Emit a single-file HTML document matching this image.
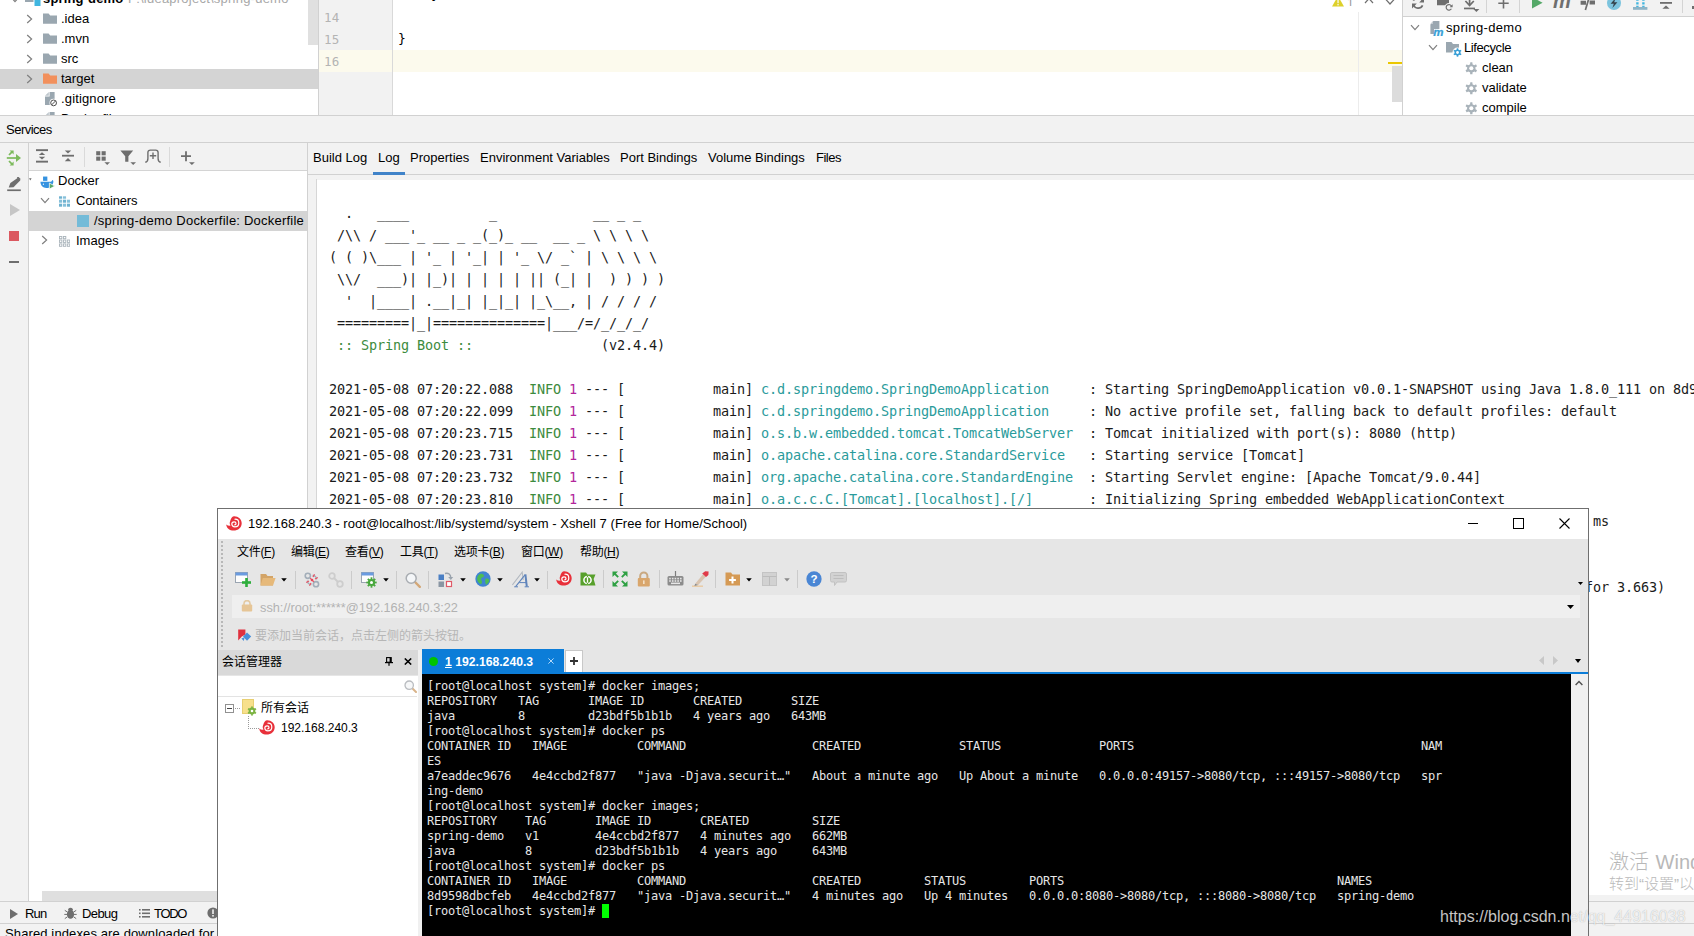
<!DOCTYPE html>
<html lang="zh-CN">
<head>
<meta charset="utf-8">
<title>IDEA Services - Xshell</title>
<style>
html,body{margin:0;padding:0;}
body{width:1694px;height:936px;overflow:hidden;position:relative;background:#fff;
 font-family:"Liberation Sans","Noto Sans CJK SC",sans-serif;font-size:13px;color:#000;}
.abs{position:absolute;}
.ui{font-family:"Liberation Sans","Noto Sans CJK SC",sans-serif;font-size:13px;color:#000;white-space:pre;line-height:22px;}
.hl{position:absolute;height:1px;background:#d1d1d1;}
.vl{position:absolute;width:1px;background:#d1d1d1;}
.mono{font-family:"DejaVu Sans Mono","Liberation Mono",monospace;white-space:pre;}
/* ---------- IDE top ---------- */
#proj{left:0;top:0;width:318px;height:115px;background:#fff;overflow:hidden;}
#gutter{left:319px;top:0;width:73px;height:115px;background:#f2f2f2;}
#editor{left:393px;top:0;width:1010px;height:115px;background:#fff;}
#maven{left:1403px;top:0;width:291px;height:115px;background:#fff;overflow:hidden;}
.row{position:absolute;left:0;height:20px;line-height:20px;white-space:pre;font-size:13px;}
.ln{position:absolute;left:324px;width:30px;font-family:"DejaVu Sans Mono","Liberation Mono",monospace;font-size:12.5px;color:#adadad;line-height:22px;height:22px;}
/* ---------- services ---------- */
#svc-head{left:0;top:116px;width:1694px;height:26px;background:#f2f2f2;}
#svc-side{left:0;top:143px;width:28px;height:758px;background:#f2f2f2;}
#svc-tree{left:29px;top:143px;width:278px;height:758px;background:#fff;overflow:hidden;}
#svc-tb{left:0;top:0;width:278px;height:28px;background:#f2f2f2;}
#con-tabs{left:308px;top:143px;width:1386px;height:31px;background:#f2f2f2;}
#con-pad{left:308px;top:175px;width:1386px;height:5px;background:#f2f2f2;}
#con-gut{left:308px;top:175px;width:9px;height:726px;background:#f2f2f2;}
#con{left:317px;top:180px;width:1377px;height:715px;background:#fff;overflow:hidden;}
#con pre{margin:0;position:absolute;left:12px;top:22px;font-family:"DejaVu Sans Mono","Liberation Mono",monospace;font-size:13.5px;letter-spacing:-0.128px;line-height:22px;color:#1a1a1a;}
.g{color:#3d8b3d;} .m{color:#b3269b;} .c{color:#2a9b9b;}
#botbar{left:0;top:902px;width:1694px;height:21px;background:#f2f2f2;}
#status{left:0;top:924px;width:1694px;height:12px;background:#f2f2f2;overflow:hidden;}
/* ---------- xshell ---------- */
#xs{left:217px;top:508px;width:1372px;height:428px;background:#e6e6e6;box-sizing:border-box;border:1px solid #6f6f6f;border-bottom:none;overflow:hidden;}
#xs-title{left:0;top:0;width:1370px;height:30px;background:#fff;}
#xs-addr{left:14px;top:86px;width:1348px;height:23px;background:#efefef;}
#xs-term{left:204px;top:165px;width:1149px;height:270px;background:#000;overflow:hidden;}
#xs-term pre{margin:0;position:absolute;left:5px;top:5px;font-family:"DejaVu Sans Mono","Liberation Mono",monospace;font-size:12px;letter-spacing:-0.224px;line-height:15px;color:#e6e6e6;}
.cur{background:#00ff00;}
.xm{font:12px/20px "Liberation Sans","Noto Sans CJK SC",sans-serif;color:#000;white-space:pre;letter-spacing:-0.3px;}
#xs-sess{left:0;top:165px;width:200px;height:270px;background:#fff;}
</style>
</head>
<body>
<!-- ======== IDE top: project tree ======== -->
<div id="proj" class="abs">
<div class="abs" style="left:0;top:69px;width:318px;height:20px;background:#d4d4d4"></div>
<div class="abs" style="left:308px;top:0;width:10px;height:45px;background:#e0e0e0"></div>
<svg class="abs" style="left:25px;top:-9px" width="16" height="15" viewBox="0 0 16 15"><path d="M0 0H6L7.5 2H14V11H0Z" fill="#9aa7b0"/><rect x="8.5" y="8" width="7" height="7" fill="#fff"/><rect x="9.5" y="9" width="6" height="6" fill="#40b6e0"/></svg>
<span class="ui abs" style="left:43px;top:-12px;font-weight:bold;letter-spacing:0.15px">spring-demo</span>
<svg class="abs" style="left:10px;top:-4px" width="10" height="7" viewBox="0 0 10 7"><path d="M1 1.2 L5 5.6 L9 1.2" fill="none" stroke="#7f7f7f" stroke-width="1.2"/></svg>
<span class="ui abs" style="left:128px;top:-12px;color:#a8a8a8;letter-spacing:0.23px">F:\ideaproject\spring-demo</span>
<svg class="abs" style="left:26px;top:14px" width="7" height="10" viewBox="0 0 7 10"><path d="M1.2 1 L5.6 5 L1.2 9" fill="none" stroke="#7f7f7f" stroke-width="1.2"/></svg>
<svg class="abs" style="left:43px;top:13px" width="14" height="11" viewBox="0 0 14 11"><path d="M0 0.4H5.6L7.2 2.4H14V10.8H0Z" fill="#9aa7b0"/></svg>
<span class="ui abs" style="left:61px;top:8px">.idea</span>
<svg class="abs" style="left:26px;top:34px" width="7" height="10" viewBox="0 0 7 10"><path d="M1.2 1 L5.6 5 L1.2 9" fill="none" stroke="#7f7f7f" stroke-width="1.2"/></svg>
<svg class="abs" style="left:43px;top:33px" width="14" height="11" viewBox="0 0 14 11"><path d="M0 0.4H5.6L7.2 2.4H14V10.8H0Z" fill="#9aa7b0"/></svg>
<span class="ui abs" style="left:61px;top:28px">.mvn</span>
<svg class="abs" style="left:26px;top:54px" width="7" height="10" viewBox="0 0 7 10"><path d="M1.2 1 L5.6 5 L1.2 9" fill="none" stroke="#7f7f7f" stroke-width="1.2"/></svg>
<svg class="abs" style="left:43px;top:53px" width="14" height="11" viewBox="0 0 14 11"><path d="M0 0.4H5.6L7.2 2.4H14V10.8H0Z" fill="#9aa7b0"/></svg>
<span class="ui abs" style="left:61px;top:48px">src</span>
<svg class="abs" style="left:26px;top:74px" width="7" height="10" viewBox="0 0 7 10"><path d="M1.2 1 L5.6 5 L1.2 9" fill="none" stroke="#7f7f7f" stroke-width="1.2"/></svg>
<svg class="abs" style="left:43px;top:73px" width="14" height="11" viewBox="0 0 14 11"><path d="M0 0.4H5.6L7.2 2.4H14V10.8H0Z" fill="#f2905c"/></svg>
<span class="ui abs" style="left:61px;top:68px">target</span>
<svg class="abs" style="left:45px;top:92px" width="13" height="15" viewBox="0 0 13 15"><path d="M4.6 0H9.6V13H0V4.6H4.6Z" fill="#9aa7b0"/><path d="M0 3.8L3.8 0V3.8Z" fill="#bcc5cb"/><circle cx="8.6" cy="10.9" r="4.1" fill="#fff"/><circle cx="8.6" cy="10.9" r="2.9" fill="none" stroke="#4d4d4d" stroke-width="1"/><path d="M6.6 12.9L10.6 8.9" stroke="#4d4d4d" stroke-width="1"/></svg>
<span class="ui abs" style="left:61px;top:88px;letter-spacing:0.15px">.gitignore</span>
<svg class="abs" style="left:45px;top:112px" width="13" height="15" viewBox="0 0 13 15"><path d="M4.6 0H9.6V13H0V4.6H4.6Z" fill="#9aa7b0"/><path d="M0 3.8L3.8 0V3.8Z" fill="#bcc5cb"/></svg>
<span class="ui abs" style="left:61px;top:108px">Dockerfile</span>
</div>
<div class="vl" style="left:318px;top:0;height:115px"></div>
<div id="gutter" class="abs">
<div class="abs" style="left:0;top:50px;width:73px;height:22px;background:#fcfaed"></div>
<span class="abs mono" style="left:5px;top:7px;font-size:12.5px;letter-spacing:0.2px;line-height:22px;color:#b4b4b4">14</span>
<span class="abs mono" style="left:5px;top:29px;font-size:12.5px;letter-spacing:0.2px;line-height:22px;color:#b4b4b4">15</span>
<span class="abs mono" style="left:5px;top:51px;font-size:12.5px;letter-spacing:0.2px;line-height:22px;color:#b4b4b4">16</span>
</div>
<div class="vl" style="left:392px;top:0;height:115px;background:#d9d9d9"></div>
<div id="editor" class="abs">
<div class="abs" style="left:0;top:50px;width:1010px;height:22px;background:#fcfaed"></div>
<span class="abs mono" style="left:38px;top:-16px;font-size:13px;line-height:22px;color:#000">}</span>
<span class="abs mono" style="left:5px;top:28px;font-size:13px;line-height:22px;color:#000">}</span>
<svg class="abs" style="left:939px;top:-4px" width="12" height="11" viewBox="0 0 12 11"><path d="M6 0L12 10.6H0Z" fill="#ddd02a"/><rect x="5.3" y="3.4" width="1.5" height="3.8" fill="#f6f3d0"/><rect x="5.3" y="8" width="1.5" height="1.4" fill="#f6f3d0"/></svg>
<div class="abs" style="left:954px;top:0;width:8px;height:6px;overflow:hidden"><span class="ui abs" style="left:0;top:-4px;color:#9a9a9a;font-size:12px;line-height:14px;height:14px">1</span></div>
<svg class="abs" style="left:971px;top:-4px" width="10" height="8" viewBox="0 0 10 8"><path d="M1 7L5 2.6L9 7" fill="none" stroke="#6e6e6e" stroke-width="1.2"/></svg>
<svg class="abs" style="left:992px;top:-3px" width="10" height="8" viewBox="0 0 10 8"><path d="M1 2.6L5 7L9 2.6" fill="none" stroke="#6e6e6e" stroke-width="1.2"/></svg>
<div class="abs" style="left:965px;top:12px;width:1px;height:103px;background:#ececec"></div>
<div class="abs" style="left:995px;top:62px;width:15px;height:2px;background:#ebc700"></div>
<div class="abs" style="left:999px;top:66px;width:11px;height:36px;background:#dcdcdc"></div>
</div>
<div class="vl" style="left:1402px;top:0;height:115px"></div>
<div id="maven" class="abs">
<div class="abs" style="left:0;top:0;width:291px;height:16px;background:#f2f2f2"></div>
<div class="hl" style="left:0;top:16px;width:291px"></div>
<svg class="abs" style="left:7px;top:-5px" width="16" height="16" viewBox="0 0 16 16"><g fill="none" stroke="#6e6e6e" stroke-width="1.7"><path d="M12.6 6.2A5 5 0 0 0 3.4 5.6"/><path d="M3.4 9.8A5 5 0 0 0 12.6 10.4"/></g><path d="M14 2.6V7.4H9.2Z" fill="#6e6e6e"/><path d="M2 13.4V8.6H6.8Z" fill="#6e6e6e"/></svg>
<svg class="abs" style="left:34px;top:-5px" width="16" height="17" viewBox="0 0 16 17"><path d="M0 1H5L6.4 3H12V10.3H0Z" fill="#6e6e6e"/><circle cx="12" cy="12.4" r="4.4" fill="#f2f2f2"/><path d="M14.6 11.4A2.8 2.8 0 1 0 14.4 13.8" fill="none" stroke="#6e6e6e" stroke-width="1.2"/><path d="M15.6 9.2V12.2H12.6Z" fill="#6e6e6e"/></svg>
<svg class="abs" style="left:61px;top:-5px" width="16" height="17" viewBox="0 0 16 17"><path d="M5.6 0V10" stroke="#6e6e6e" stroke-width="1.7"/><path d="M1.4 6L5.6 10.4L9.8 6" fill="none" stroke="#6e6e6e" stroke-width="1.7"/><rect x="0" y="12.6" width="11" height="1.7" fill="#6e6e6e"/><path d="M9.4 14H15.4L12.4 17Z" fill="#6e6e6e"/></svg>
<div class="vl" style="left:83px;top:0;height:13px;background:#d4d4d4"></div>
<svg class="abs" style="left:95px;top:-2px" width="11" height="11" viewBox="0 0 11 11"><path d="M5.5 0V10.4M0.3 5.2H10.7" stroke="#6e6e6e" stroke-width="1.6"/></svg>
<div class="vl" style="left:116px;top:0;height:13px;background:#d4d4d4"></div>
<svg class="abs" style="left:129px;top:-3px" width="11" height="12" viewBox="0 0 11 12"><path d="M0 0L10.6 5.8L0 11.6Z" fill="#55a868"/></svg>
<span class="abs" style="left:150px;top:-10px;font:italic bold 20px/22px 'Liberation Sans',sans-serif;color:#6e6e6e;letter-spacing:-1px">m</span>
<svg class="abs" style="left:177px;top:-5px" width="16" height="16" viewBox="0 0 16 16"><path d="M0.6 5.8H6V9.8H0.6ZM9.6 5.4H15V9.4H9.6Z" fill="#6e6e6e"/><path d="M9.6 1L5.4 15" stroke="#6e6e6e" stroke-width="1.7"/></svg>
<svg class="abs" style="left:204px;top:-4px" width="14" height="14" viewBox="0 0 14 14"><circle cx="7" cy="7" r="7" fill="#7cc4de"/><path d="M8.6 2L3.6 7.8H6.8L5.4 12L10.4 6.2H7.2Z" fill="#34424a"/></svg>
<svg class="abs" style="left:230px;top:-5px" width="15" height="15" viewBox="0 0 15 15"><rect x="0" y="12" width="14.4" height="2.8" fill="#8eb4c6"/><g stroke="#40b6e0" stroke-width="2.4" stroke-dasharray="2.2 1.4"><path d="M4.4 0V12M10.4 0V12"/></g></svg>
<svg class="abs" style="left:257px;top:-5px" width="12" height="16" viewBox="0 0 12 16"><rect x="0" y="7" width="12" height="1.8" fill="#6e6e6e"/><path d="M2.4 13.8L6 10.6L9.6 13.8Z" fill="#6e6e6e"/><path d="M6 0V4.6" stroke="#6e6e6e" stroke-width="1.5"/></svg>
<div class="vl" style="left:279px;top:0;height:13px;background:#d4d4d4"></div>
<div class="abs" style="left:289px;top:6px;width:3px;height:3px;background:#6e6e6e"></div>
<svg class="abs" style="left:7px;top:24px" width="10" height="7" viewBox="0 0 10 7"><path d="M1 1.2 L5 5.6 L9 1.2" fill="none" stroke="#7f7f7f" stroke-width="1.2"/></svg>
<svg class="abs" style="left:27px;top:21px" width="14" height="15" viewBox="0 0 14 15"><path d="M3.4 0H9.4V8H4V13H0.4V3.4Z" fill="#9aa7b0"/><path d="M0.4 2.9H2.9V0Z" fill="#c9d0d5"/><text x="3.2" y="14.8" font-family="Liberation Sans,sans-serif" font-size="11.5" font-weight="bold" font-style="italic" fill="#389fd6" stroke="#389fd6" stroke-width="0.3">m</text></svg>
<span class="ui abs" style="left:43px;top:17px;letter-spacing:0.35px">spring-demo</span>
<svg class="abs" style="left:25px;top:44px" width="10" height="7" viewBox="0 0 10 7"><path d="M1 1.2 L5 5.6 L9 1.2" fill="none" stroke="#7f7f7f" stroke-width="1.2"/></svg>
<svg class="abs" style="left:43px;top:42px" width="17" height="16" viewBox="0 0 17 16"><path d="M0 0H5.5L7 2H13V10.5H0Z" fill="#9aa7b0"/><circle cx="11.5" cy="10.5" r="5" fill="#fff"/><g fill="#389fd6"><circle cx="11.5" cy="10.5" r="3"/><rect x="10.7" y="6.3" width="1.6" height="8.4"/><rect x="10.7" y="6.3" width="1.6" height="8.4" transform="rotate(60 11.5 10.5)"/><rect x="10.7" y="6.3" width="1.6" height="8.4" transform="rotate(120 11.5 10.5)"/></g><circle cx="11.5" cy="10.5" r="1.4" fill="#fff"/></svg>
<span class="ui abs" style="left:61px;top:37px;letter-spacing:-0.4px">Lifecycle</span>
<svg class="abs" style="left:62px;top:62px" width="12.6" height="12.6" viewBox="0 0 14 14"><g fill="#a9b3ba"><circle cx="7" cy="7" r="4.6"/><g id="t"><rect x="5.7" y="0.3" width="2.6" height="13.4" rx="0.4"/></g><rect x="5.7" y="0.3" width="2.6" height="13.4" rx="0.4" transform="rotate(60 7 7)"/><rect x="5.7" y="0.3" width="2.6" height="13.4" rx="0.4" transform="rotate(120 7 7)"/></g><circle cx="7" cy="7" r="2.3" fill="#fff"/></svg>
<span class="ui abs" style="left:79px;top:57px">clean</span>
<svg class="abs" style="left:62px;top:82px" width="12.6" height="12.6" viewBox="0 0 14 14"><g fill="#a9b3ba"><circle cx="7" cy="7" r="4.6"/><g id="t"><rect x="5.7" y="0.3" width="2.6" height="13.4" rx="0.4"/></g><rect x="5.7" y="0.3" width="2.6" height="13.4" rx="0.4" transform="rotate(60 7 7)"/><rect x="5.7" y="0.3" width="2.6" height="13.4" rx="0.4" transform="rotate(120 7 7)"/></g><circle cx="7" cy="7" r="2.3" fill="#fff"/></svg>
<span class="ui abs" style="left:79px;top:77px">validate</span>
<svg class="abs" style="left:62px;top:102px" width="12.6" height="12.6" viewBox="0 0 14 14"><g fill="#a9b3ba"><circle cx="7" cy="7" r="4.6"/><g id="t"><rect x="5.7" y="0.3" width="2.6" height="13.4" rx="0.4"/></g><rect x="5.7" y="0.3" width="2.6" height="13.4" rx="0.4" transform="rotate(60 7 7)"/><rect x="5.7" y="0.3" width="2.6" height="13.4" rx="0.4" transform="rotate(120 7 7)"/></g><circle cx="7" cy="7" r="2.3" fill="#fff"/></svg>
<span class="ui abs" style="left:79px;top:97px">compile</span>
</div>
<div class="hl" style="left:0;top:115px;width:1694px"></div>

<!-- ======== Services ======== -->
<div id="svc-head" class="abs"><span class="ui abs" style="left:6px;top:3px;letter-spacing:-0.5px">Services</span></div>
<div class="hl" style="left:0;top:142px;width:1694px"></div>
<div id="svc-side" class="abs">
<svg class="abs" style="left:6px;top:7px" width="16" height="16" viewBox="0 0 16 16"><g fill="none" stroke="#7cba5c" stroke-width="1.7"><path d="M0.8 8H12"/><path d="M3 5L6 1.8"/><path d="M3 11L6 14.2"/></g><g fill="#7cba5c"><path d="M10 4L15 8L10 12Z"/><path d="M3.6 0.6H7.6V4.6Z"/><path d="M3.6 15.4H7.6V11.4Z"/></g></svg>
<svg class="abs" style="left:7px;top:34px" width="15" height="15" viewBox="0 0 15 15"><path d="M1.2 10.6L2.9 5.9L10.4 0.8L12.9 3.3L6 10.3Z" fill="#6e6e6e" transform="translate(0.5 0)"/><path d="M9.8 0.6L11.2 -0.4L13.6 2L12.8 3.2Z" fill="#6e6e6e"/><rect x="0.2" y="12.4" width="13.6" height="1.7" fill="#6e6e6e"/></svg>
<svg class="abs" style="left:10px;top:61px" width="10" height="12" viewBox="0 0 10 12"><path d="M0 0L10 6L0 12Z" fill="#c6c6c6"/></svg>
<div class="abs" style="left:9px;top:88px;width:10px;height:10px;background:#db5860"></div>
<div class="abs" style="left:9px;top:118px;width:10px;height:2px;background:#6e6e6e"></div>
</div>
<div class="vl" style="left:28px;top:143px;height:758px"></div>
<div id="svc-tree" class="abs">
<div id="svc-tb" class="abs">
<svg class="abs" style="left:7px;top:6px" width="12" height="14" viewBox="0 0 12 14"><g fill="#6e6e6e"><rect x="0" y="0.2" width="12" height="1.9"/><rect x="0" y="11.7" width="12" height="1.9"/><path d="M6 3.2L9.2 6H2.8Z"/><path d="M6 10.6L9.2 7.8H2.8Z"/></g></svg>
<svg class="abs" style="left:33px;top:6px" width="12" height="14" viewBox="0 0 12 14"><g fill="#6e6e6e"><rect x="0" y="5.8" width="12" height="1.8"/><path d="M6 4.4L9.2 1.4H2.8Z"/><path d="M6 9L9.2 12.2H2.8Z"/></g></svg>
<div class="vl" style="left:55px;top:4px;height:20px;background:#dadada"></div>
<svg class="abs" style="left:67px;top:8px" width="15" height="14" viewBox="0 0 15 14"><g fill="#6e6e6e"><rect x="0.2" y="0.2" width="4.1" height="4.1"/><rect x="5.6" y="0.2" width="4.1" height="4.1"/><rect x="0.2" y="5.6" width="4.1" height="4.1"/><rect x="5.6" y="5.6" width="4.1" height="4.1"/><path d="M8.4 11.2H14L11.2 14Z"/></g></svg>
<svg class="abs" style="left:91px;top:7px" width="16" height="15" viewBox="0 0 16 15"><g fill="#6e6e6e"><path d="M0.4 0.4H13.2L8.4 6.2V11.8H5.2V6.2Z"/><path d="M10.4 12.2H16L13.2 15Z"/></g></svg>
<svg class="abs" style="left:116px;top:6px" width="16" height="14" viewBox="0 0 16 14"><g fill="none" stroke="#6e6e6e" stroke-width="1.4"><path d="M0.3 13.2C2.2 12.8 2.9 11.4 2.9 9.4V3.6Q2.9 1.1 5.4 1.1H10.6Q13.1 1.1 13.1 3.6V9.4C13.1 11.4 13.8 12.8 15.7 13.2"/><path d="M8 3.6V10M4.8 6.8H11.2"/></g></svg>
<div class="vl" style="left:140px;top:4px;height:20px;background:#dadada"></div>
<svg class="abs" style="left:152px;top:8px" width="14" height="14" viewBox="0 0 14 14"><path d="M5 0.2V10.2M0 5.2H10" stroke="#6e6e6e" stroke-width="1.8" fill="none"/><path d="M8 11.2H13.8L10.9 14Z" fill="#6e6e6e"/></svg>
<div class="hl" style="left:0;top:27px;width:278px;background:#d4d4d4"></div>
</div>
<div class="abs" style="left:0;top:68px;width:278px;height:20px;background:#d4d4d4"></div>
<svg class="abs" style="left:0;top:35px" width="3" height="3" viewBox="0 0 3 3"><path d="M0 0.3H2.6L1.3 2.6Z" fill="#6a6a6a"/></svg>
<svg class="abs" style="left:11px;top:33px" width="16" height="14" viewBox="0 0 17 15"><rect x="3.2" y="0.6" width="4.6" height="4.6" fill="#3592e0"/><path d="M0.4 6.2H11.5C12.4 6 12.9 5.3 13 4.4C14 4.8 14.4 5.6 14.2 6.6C13.4 10.8 10.6 12.8 6.8 12.8C3 12.8 0.6 10.4 0.4 6.2Z" fill="#3592e0"/><path d="M10 7.6L15.8 10.8L10 14Z" fill="#59a869" stroke="#fff" stroke-width="0.8"/><circle cx="3.6" cy="8.8" r="0.7" fill="#fff"/></svg>
<span class="ui abs" style="left:29px;top:27px">Docker</span>
<svg class="abs" style="left:11px;top:54px" width="10" height="7" viewBox="0 0 10 7"><path d="M1 1.2 L5 5.6 L9 1.2" fill="none" stroke="#7f7f7f" stroke-width="1.2"/></svg>
<svg class="abs" style="left:30px;top:53px" width="11" height="11" viewBox="0 0 11 11"><rect x="0" y="0.3" width="3.1" height="2.4" fill="#6fb2d0"/><rect x="3.95" y="0.3" width="3.1" height="2.4" fill="#86c0da"/><rect x="0" y="3.7" width="3.1" height="3" fill="#86c0da"/><rect x="3.95" y="3.7" width="3.1" height="3" fill="#6fb2d0"/><rect x="7.9" y="3.7" width="3.1" height="3" fill="#86c0da"/><rect x="0" y="7.7" width="3.1" height="3" fill="#6fb2d0"/><rect x="3.95" y="7.7" width="3.1" height="3" fill="#86c0da"/><rect x="7.9" y="7.7" width="3.1" height="3" fill="#6fb2d0"/></svg>
<span class="ui abs" style="left:47px;top:47px;letter-spacing:-0.15px">Containers</span>
<div class="abs" style="left:48px;top:72px;width:12px;height:12px;background:#74bbd8"></div>
<span class="ui abs" style="left:65px;top:67px;letter-spacing:0.22px">/spring-demo Dockerfile: Dockerfile</span>
<svg class="abs" style="left:12px;top:92px" width="7" height="10" viewBox="0 0 7 10"><path d="M1.2 1 L5.6 5 L1.2 9" fill="none" stroke="#7f7f7f" stroke-width="1.2"/></svg>
<svg class="abs" style="left:30px;top:93px" width="11" height="11" viewBox="0 0 11 11"><rect x="0.45" y="0.5" width="2.4" height="2.2" fill="none" stroke="#a9b3ba" stroke-width="0.9"/><rect x="4.4" y="0.5" width="2.4" height="2.2" fill="none" stroke="#a9b3ba" stroke-width="0.9"/><rect x="0.45" y="4" width="2.4" height="2.4" fill="none" stroke="#a9b3ba" stroke-width="0.9"/><rect x="4.4" y="4" width="2.4" height="2.4" fill="none" stroke="#a9b3ba" stroke-width="0.9"/><rect x="8.35" y="4" width="2.4" height="2.4" fill="none" stroke="#a9b3ba" stroke-width="0.9"/><rect x="0.45" y="7.9" width="2.4" height="2.4" fill="none" stroke="#a9b3ba" stroke-width="0.9"/><rect x="4.4" y="7.9" width="2.4" height="2.4" fill="none" stroke="#a9b3ba" stroke-width="0.9"/><rect x="8.35" y="7.9" width="2.4" height="2.4" fill="none" stroke="#a9b3ba" stroke-width="0.9"/></svg>
<span class="ui abs" style="left:47px;top:87px">Images</span>
<div class="abs" style="left:13px;top:748px;width:265px;height:10px;background:#dfdfdf"></div>
</div>
<div class="vl" style="left:307px;top:143px;height:758px"></div>
<div id="con-tabs" class="abs">
<span class="ui abs" style="left:5px;top:4px">Build Log</span>
<span class="ui abs" style="left:70px;top:4px">Log</span>
<span class="ui abs" style="left:102px;top:4px">Properties</span>
<span class="ui abs" style="left:172px;top:4px">Environment Variables</span>
<span class="ui abs" style="left:312px;top:4px">Port Bindings</span>
<span class="ui abs" style="left:400px;top:4px">Volume Bindings</span>
<span class="ui abs" style="left:508px;top:4px;letter-spacing:-0.5px">Files</span>
<div class="abs" style="left:65px;top:29px;width:32px;height:3px;background:#4083c9"></div>
</div>
<div class="hl" style="left:308px;top:174px;width:1386px"></div>
<div class="abs" style="left:373px;top:172px;width:32px;height:3px;background:#4083c9"></div>
<div id="con-pad" class="abs"></div>
<div id="con-gut" class="abs"></div>
<div class="vl" style="left:316px;top:179px;height:716px;background:#d6d6d6"></div>
<div id="con" class="abs"><pre>
  .   ____          _            __ _ _
 /\\ / ___'_ __ _ _(_)_ __  __ _ \ \ \ \
( ( )\___ | '_ | '_| | '_ \/ _` | \ \ \ \
 \\/  ___)| |_)| | | | | || (_| |  ) ) ) )
  '  |____| .__|_| |_|_| |_\__, | / / / /
 =========|_|==============|___/=/_/_/_/
<span class="g"> :: Spring Boot :: </span>               (v2.4.4)

2021-05-08 07:20:22.088  <span class="g">INFO</span> <span class="m">1</span> --- [           main] <span class="c">c.d.springdemo.SpringDemoApplication    </span> : Starting SpringDemoApplication v0.0.1-SNAPSHOT using Java 1.8.0_111 on 8d9598dbcfeb with PID 1 (/app.jar started by root in /)
2021-05-08 07:20:22.099  <span class="g">INFO</span> <span class="m">1</span> --- [           main] <span class="c">c.d.springdemo.SpringDemoApplication    </span> : No active profile set, falling back to default profiles: default
2021-05-08 07:20:23.715  <span class="g">INFO</span> <span class="m">1</span> --- [           main] <span class="c">o.s.b.w.embedded.tomcat.TomcatWebServer </span> : Tomcat initialized with port(s): 8080 (http)
2021-05-08 07:20:23.731  <span class="g">INFO</span> <span class="m">1</span> --- [           main] <span class="c">o.apache.catalina.core.StandardService  </span> : Starting service [Tomcat]
2021-05-08 07:20:23.732  <span class="g">INFO</span> <span class="m">1</span> --- [           main] <span class="c">org.apache.catalina.core.StandardEngine </span> : Starting Servlet engine: [Apache Tomcat/9.0.44]
2021-05-08 07:20:23.810  <span class="g">INFO</span> <span class="m">1</span> --- [           main] <span class="c">o.a.c.c.C.[Tomcat].[localhost].[/]      </span> : Initializing Spring embedded WebApplicationContext
2021-05-08 07:20:23.810  <span class="g">INFO</span> <span class="m">1</span> --- [           main] <span class="c">w.s.c.ServletWebApplicationContext      </span> : Root WebApplicationContext: initialization completed in 1634 ms
2021-05-08 07:20:24.345  <span class="g">INFO</span> <span class="m">1</span> --- [           main] <span class="c">o.s.s.concurrent.ThreadPoolTaskExecutor </span> : Initializing ExecutorService 'applicationTaskExecutor'
2021-05-08 07:20:24.681  <span class="g">INFO</span> <span class="m">1</span> --- [           main] <span class="c">o.s.b.w.embedded.tomcat.TomcatWebServer </span> : Tomcat started on port(s): 8080 (http) with context path ''
2021-05-08 07:20:24.699  <span class="g">INFO</span> <span class="m">1</span> --- [           main] <span class="c">c.d.springdemo.SpringDemoApplication    </span> : Started SpringDemoApplication in 3.152 seconds (JVM running for 3.663)</pre></div>
<div class="hl" style="left:0;top:901px;width:1694px"></div>
<div id="botbar" class="abs">
<svg class="abs" style="left:10px;top:7px" width="8" height="10" viewBox="0 0 8 10"><path d="M0 0L8 5L0 10Z" fill="#6e6e6e"/></svg>
<span class="ui abs" style="left:25px;top:1px;letter-spacing:-0.8px">Run</span>
<svg class="abs" style="left:64px;top:5px" width="13" height="13" viewBox="0 0 13 13"><g fill="#6e6e6e"><ellipse cx="6.5" cy="7.2" rx="3.6" ry="4.6"/><path d="M4 3.2A2.5 2.5 0 0 1 9 3.2Z"/></g><g stroke="#6e6e6e" stroke-width="1" fill="none"><path d="M0.8 3.4L3.4 5M12.2 3.4L9.6 5M0.3 7.4H3M12.7 7.4H10M0.8 11.6L3.4 9.8M12.2 11.6L9.6 9.8"/></g></svg>
<span class="ui abs" style="left:82px;top:1px;letter-spacing:-0.6px">Debug</span>
<svg class="abs" style="left:139px;top:7px" width="11" height="9" viewBox="0 0 11 9"><g fill="#6e6e6e"><rect x="0" y="0" width="1.6" height="1.6"/><rect x="3" y="0" width="8" height="1.6"/><rect x="0" y="3.5" width="1.6" height="1.6"/><rect x="3" y="3.5" width="8" height="1.6"/><rect x="0" y="7" width="1.6" height="1.6"/><rect x="3" y="7" width="8" height="1.6"/></g></svg>
<span class="ui abs" style="left:154px;top:1px;letter-spacing:-1.3px">TODO</span>
<svg class="abs" style="left:207px;top:5px" width="12" height="12" viewBox="0 0 12 12"><circle cx="6" cy="6" r="5.6" fill="#6e6e6e"/><rect x="5.2" y="2.4" width="1.6" height="4.6" fill="#f2f2f2"/><rect x="5.2" y="8" width="1.6" height="1.6" fill="#f2f2f2"/></svg>
</div>
<div class="hl" style="left:0;top:923px;width:1694px"></div>
<div id="status" class="abs"><span class="ui abs" style="left:5px;top:-1px;letter-spacing:0.12px">Shared indexes are downloaded for Maven libraries</span></div>

<!-- ======== watermarks ======== -->
<div class="abs" style="left:317px;top:895px;width:1377px;height:6px;background:#f2f2f2"></div>
<span class="abs" style="left:1609px;top:848px;font:300 20px/28px 'Liberation Sans','Noto Sans CJK SC',sans-serif;color:#b8b8b8;word-spacing:1px;white-space:pre">激活 Windows</span>
<span class="abs" style="left:1609px;top:874px;font:300 15px/20px 'Liberation Sans','Noto Sans CJK SC',sans-serif;color:#bababa;white-space:pre">转到“设置”以激活 Windows。</span>
<!-- ======== Xshell window ======== -->
<div id="xs" class="abs">
<div id="xs-title" class="abs">
<svg class="abs" style="left:8px;top:7px" width="16" height="15" viewBox="0 0 16 15"><path d="M8.2 0.3C12.4 0.3 15.7 3.3 15.7 7.2C15.7 11.4 12.2 14.6 7.6 14.6C3.6 14.6 0.8 12.4 0.2 8.4C1.6 9.6 3.2 10 4.6 9.6C3.6 8.4 3.4 6.6 4.2 5C5 2.2 6.4 0.3 8.2 0.3Z" fill="#e8303a"/><path d="M9 3.2C11.2 3.2 12.8 4.8 12.8 6.9C12.8 9.2 11 10.8 8.8 10.8C7 10.8 5.8 9.7 5.8 8.1C5.8 6.8 6.8 5.8 8.1 5.8C9.2 5.8 10 6.6 10 7.5C10 8.3 9.4 8.8 8.7 8.8" fill="none" stroke="#fff" stroke-width="1.2" stroke-linecap="round"/></svg>
<span class="abs" style="left:30px;top:5px;font:13px/20px 'Liberation Sans',sans-serif;letter-spacing:0.04px;white-space:pre;color:#000">192.168.240.3 - root@localhost:/lib/systemd/system - Xshell 7 (Free for Home/School)</span>
<div class="abs" style="left:1250px;top:14px;width:10px;height:1px;background:#000"></div>
<div class="abs" style="left:1295px;top:9px;width:9px;height:9px;border:1px solid #000;box-sizing:content-box"></div>
<svg class="abs" style="left:1341px;top:9px" width="11" height="11" viewBox="0 0 11 11"><path d="M0.5 0.5L10.5 10.5M10.5 0.5L0.5 10.5" stroke="#000" stroke-width="1.1"/></svg>
</div>
<div class="abs" style="left:3px;top:32px;width:2px;height:108px;background:repeating-linear-gradient(#b8b8b8 0 2px,transparent 2px 4px)"></div>
<span class="abs xm" style="left:19px;top:33px">文件(<u>F</u>)</span>
<span class="abs xm" style="left:73px;top:33px">编辑(<u>E</u>)</span>
<span class="abs xm" style="left:127px;top:33px">查看(<u>V</u>)</span>
<span class="abs xm" style="left:182px;top:33px">工具(<u>T</u>)</span>
<span class="abs xm" style="left:236px;top:33px">选项卡(<u>B</u>)</span>
<span class="abs xm" style="left:303px;top:33px">窗口(<u>W</u>)</span>
<span class="abs xm" style="left:362px;top:33px">帮助(<u>H</u>)</span>
<svg class="abs" style="left:17px;top:63px" width="16" height="16" viewBox="0 0 16 16"><rect x="0.5" y="0.5" width="12" height="10" fill="#fdfdfd" stroke="#9aa5b1"/><rect x="0.5" y="0.5" width="12" height="3" fill="#6a9be0"/><rect x="7" y="9.2" width="9" height="2.6" fill="#2eae3c"/><rect x="10.2" y="6" width="2.6" height="9" fill="#2eae3c"/></svg>
<svg class="abs" style="left:42px;top:64px" width="16" height="14" viewBox="0 0 16 14"><path d="M0.5 1H6L7.5 3H13V12.5H0.5Z" fill="#d3a467"/><path d="M2.8 5H15.6L13 12.5H0.5Z" fill="#e6b97a"/></svg>
<svg class="abs" style="left:63px;top:69px" width="6" height="4" viewBox="0 0 6 4"><path d="M0.2 0.2H5.8L3 3.6Z" fill="#000"/></svg>
<div class="abs" style="left:77px;top:62px;width:1px;height:18px;background:#cbcbcb"></div>
<svg class="abs" style="left:86px;top:63px" width="16" height="16" viewBox="0 0 16 16"><g fill="none" stroke="#a3aeb9" stroke-width="1.6"><circle cx="3.8" cy="3.8" r="2.6"/><circle cx="12" cy="12.2" r="2.6"/><path d="M3.5 8.5C3.5 11 5 12.5 7.5 12.5M12.5 7.5C12.5 5 11 3.5 8.5 3.5" stroke-width="1.3"/></g><g stroke="#ea5060" stroke-width="1.2"><path d="M8 8L6.2 6.2M8 8L9.8 9.8M10.5 2.2L9 5M13.8 5.5L11 7M5.5 13.8L7 11M2.2 10.5L5 9"/></g><circle cx="8" cy="8" r="1.3" fill="#ea4456"/></svg>
<svg class="abs" style="left:110px;top:63px" width="16" height="16" viewBox="0 0 16 16"><g fill="none" stroke="#cdcdcd" stroke-width="1.8"><circle cx="4" cy="4" r="2.8"/><circle cx="12" cy="12" r="2.8"/><path d="M6 6L10 10"/></g></svg>
<div class="abs" style="left:133px;top:62px;width:1px;height:18px;background:#cbcbcb"></div>
<svg class="abs" style="left:143px;top:63px" width="16" height="16" viewBox="0 0 16 16"><rect x="0.5" y="0.5" width="12" height="10" fill="#fdfdfd" stroke="#9aa5b1"/><rect x="0.5" y="0.5" width="12" height="3" fill="#6a9be0"/><g fill="#49a83e"><circle cx="10.5" cy="10.5" r="3.6"/><rect x="9.6" y="5.3" width="1.8" height="10.4"/><rect x="9.6" y="5.3" width="1.8" height="10.4" transform="rotate(45 10.5 10.5)"/><rect x="9.6" y="5.3" width="1.8" height="10.4" transform="rotate(90 10.5 10.5)"/><rect x="9.6" y="5.3" width="1.8" height="10.4" transform="rotate(135 10.5 10.5)"/></g><circle cx="10.5" cy="10.5" r="1.5" fill="#fff"/></svg>
<svg class="abs" style="left:165px;top:69px" width="6" height="4" viewBox="0 0 6 4"><path d="M0.2 0.2H5.8L3 3.6Z" fill="#000"/></svg>
<div class="abs" style="left:178px;top:62px;width:1px;height:18px;background:#cbcbcb"></div>
<svg class="abs" style="left:187px;top:63px" width="16" height="16" viewBox="0 0 16 16"><path d="M9.5 9.5L14.8 14.8" stroke="#d4a878" stroke-width="2.4" stroke-linecap="round"/><circle cx="6.2" cy="6.2" r="5" fill="#f4f6f8" stroke="#a9adb2" stroke-width="1.5"/></svg>
<div class="abs" style="left:210px;top:62px;width:1px;height:18px;background:#cbcbcb"></div>
<svg class="abs" style="left:220px;top:63px" width="16" height="16" viewBox="0 0 16 16"><rect x="0.5" y="2.5" width="5.5" height="5.5" fill="#4a7fc4"/><rect x="0.5" y="9.5" width="5.5" height="5.5" fill="#8a96a3"/><rect x="8.5" y="9.5" width="5" height="5" fill="#fff" stroke="#e05a68" stroke-width="1.2"/><path d="M7 1.5C10.5 0.5 12.8 2.5 12.8 6" fill="none" stroke="#9aa3ad" stroke-width="1.4"/><path d="M10.2 5L12.8 8L15.2 5Z" fill="#9aa3ad"/></svg>
<svg class="abs" style="left:242px;top:69px" width="6" height="4" viewBox="0 0 6 4"><path d="M0.2 0.2H5.8L3 3.6Z" fill="#000"/></svg>
<svg class="abs" style="left:257px;top:62px" width="16" height="16" viewBox="0 0 18 18"><circle cx="9" cy="9" r="8.6" fill="#3f84d2"/><path d="M4 4.5C6 2.5 9 3 10 4.8C10.6 6 9.4 7 8 7.4C6.6 7.8 6.4 9.4 7.4 10.6C8.4 11.8 8 14 6.6 15C4 14 2 11 2.4 8C2.6 6.6 3.2 5.4 4 4.5Z" fill="#4cbc55"/><path d="M12 8.5C13.6 8 15.6 8.8 16.2 10C15.8 12.4 14.4 14.4 12.4 15.4C11.4 13.6 11 10 12 8.5Z" fill="#4cbc55"/></svg>
<svg class="abs" style="left:279px;top:69px" width="6" height="4" viewBox="0 0 6 4"><path d="M0.2 0.2H5.8L3 3.6Z" fill="#000"/></svg>
<svg class="abs" style="left:294px;top:62px" width="18" height="17" viewBox="0 0 18 17"><g fill="none" stroke="#b3b9c1" stroke-width="1.1"><path d="M0.4 14L10.2 1.2L11.2 9"/></g><g fill="none" stroke="#5f84bb"><path d="M3.6 15.6L13.2 3.6" stroke-width="1.1"/><path d="M13.4 3.4L14.8 15.6" stroke-width="2"/><path d="M7.2 11.6H14.2" stroke-width="1"/><path d="M2.2 15.8H6M12.6 15.8H17" stroke-width="1"/></g></svg>
<svg class="abs" style="left:316px;top:69px" width="6" height="4" viewBox="0 0 6 4"><path d="M0.2 0.2H5.8L3 3.6Z" fill="#000"/></svg>
<div class="abs" style="left:329px;top:62px;width:1px;height:18px;background:#cbcbcb"></div>
<svg class="abs" style="left:338px;top:62px" width="16" height="15" viewBox="0 0 16 15"><path d="M8.2 0.3C12.4 0.3 15.7 3.3 15.7 7.2C15.7 11.4 12.2 14.6 7.6 14.6C3.6 14.6 0.8 12.4 0.2 8.4C1.6 9.6 3.2 10 4.6 9.6C3.6 8.4 3.4 6.6 4.2 5C5 2.2 6.4 0.3 8.2 0.3Z" fill="#e8303a"/><path d="M9 3.2C11.2 3.2 12.8 4.8 12.8 6.9C12.8 9.2 11 10.8 8.8 10.8C7 10.8 5.8 9.7 5.8 8.1C5.8 6.8 6.8 5.8 8.1 5.8C9.2 5.8 10 6.6 10 7.5C10 8.3 9.4 8.8 8.7 8.8" fill="none" stroke="#fff" stroke-width="1.2" stroke-linecap="round"/></svg>
<svg class="abs" style="left:362px;top:63px" width="16" height="14" viewBox="0 0 16 14"><path d="M0.5 0.5H6L7.5 2.5H15.5L13.6 7L15.5 13.5H0.5Z" fill="#58a02c"/><circle cx="7.5" cy="8" r="3.6" fill="none" stroke="#fff" stroke-width="1.5"/><path d="M7.5 3.6V12.4" stroke="#58a02c" stroke-width="1.3"/><path d="M7.5 5.2V10.8" stroke="#fff" stroke-width="1.3"/></svg>
<div class="abs" style="left:385px;top:61px;width:1px;height:18px;background:#cbcbcb"></div>
<svg class="abs" style="left:394px;top:62px" width="16" height="16" viewBox="0 0 16 16"><g fill="#2ea043"><path d="M0.5 0.5H6L0.5 6Z"/><path d="M15.5 0.5H10L15.5 6Z"/><path d="M0.5 15.5H6L0.5 10Z"/><path d="M15.5 15.5H10L15.5 10Z"/></g><g stroke="#2ea043" stroke-width="1.8"><path d="M2 2L6.2 6.2M14 2L9.8 6.2M2 14L6.2 9.8M14 14L9.8 9.8"/></g></svg>
<svg class="abs" style="left:419px;top:62px" width="14" height="16" viewBox="0 0 14 16"><path d="M3.2 7.5V5A3.6 3.6 0 0 1 10.4 5V7.5" fill="none" stroke="#c9a880" stroke-width="2"/><rect x="0.8" y="7" width="12" height="8.4" rx="1" fill="#d9a66c"/><rect x="6" y="9.4" width="1.6" height="3.6" fill="#f3e0c6"/></svg>
<div class="abs" style="left:441px;top:61px;width:1px;height:18px;background:#cbcbcb"></div>
<svg class="abs" style="left:449px;top:62px" width="17" height="16" viewBox="0 0 17 16"><path d="M8.5 0V5" stroke="#7d7d7d" stroke-width="1.2"/><rect x="0.5" y="5" width="16" height="9.5" rx="1.5" fill="#8c8c8c"/><g fill="#e6e6e6"><rect x="2.2" y="6.8" width="1.6" height="1.6"/><rect x="4.9" y="6.8" width="1.6" height="1.6"/><rect x="7.6" y="6.8" width="1.6" height="1.6"/><rect x="10.3" y="6.8" width="1.6" height="1.6"/><rect x="13" y="6.8" width="1.6" height="1.6"/><rect x="2.2" y="9.2" width="1.6" height="1.6"/><rect x="4.9" y="9.2" width="1.6" height="1.6"/><rect x="7.6" y="9.2" width="1.6" height="1.6"/><rect x="10.3" y="9.2" width="1.6" height="1.6"/><rect x="13" y="9.2" width="1.6" height="1.6"/><rect x="4" y="11.6" width="9" height="1.5"/></g></svg>
<svg class="abs" style="left:474px;top:62px" width="17" height="16" viewBox="0 0 17 16"><path d="M0 15.2H11" stroke="#e9c9a0" stroke-width="1.4"/><path d="M3.2 12.8L11 3.2L14 5.6L6.2 14Z" fill="#d9c4b0"/><path d="M3.2 12.8L2.4 15L6.2 14Z" fill="#8a8a8a"/><path d="M10.2 2.6L13.2 0.2L16.6 0.6L16.4 4L14 6Z" fill="#e03a48"/></svg>
<div class="abs" style="left:497px;top:61px;width:1px;height:18px;background:#cbcbcb"></div>
<svg class="abs" style="left:507px;top:63px" width="16" height="14" viewBox="0 0 16 14"><path d="M0.5 0.5H6L7.5 2.5H15V13.5H0.5Z" fill="#d59a55"/><path d="M7.5 4.6V11.4M4.1 8H10.9" stroke="#fff" stroke-width="2"/></svg>
<svg class="abs" style="left:528px;top:69px" width="6" height="4" viewBox="0 0 6 4"><path d="M0.2 0.2H5.8L3 3.6Z" fill="#000"/></svg>
<svg class="abs" style="left:544px;top:63px" width="15" height="14" viewBox="0 0 15 14"><rect x="0.5" y="0.5" width="14" height="13" fill="#d2d2d2" stroke="#c4c4c4"/><path d="M0.5 4.5H14.5M7.5 4.5V13.5" stroke="#bcbcbc"/></svg>
<svg class="abs" style="left:566px;top:69px" width="6" height="4" viewBox="0 0 6 4"><path d="M0.2 0.2H5.8L3 3.6Z" fill="#8a8a8a"/></svg>
<div class="abs" style="left:579px;top:61px;width:1px;height:18px;background:#cbcbcb"></div>
<svg class="abs" style="left:588px;top:62px" width="16" height="16" viewBox="0 0 18 18"><circle cx="9" cy="9" r="8.6" fill="#4a86d4"/><text x="9" y="13.6" text-anchor="middle" font-family="Liberation Sans,sans-serif" font-weight="bold" font-size="13" fill="#fff">?</text></svg>
<svg class="abs" style="left:612px;top:63px" width="17" height="15" viewBox="0 0 17 15"><path d="M2 0.5H15A1.5 1.5 0 0 1 16.5 2V8.5A1.5 1.5 0 0 1 15 10H7L4.5 13.5V10H2A1.5 1.5 0 0 1 0.5 8.5V2A1.5 1.5 0 0 1 2 0.5Z" fill="#d2d2d2" stroke="#c2c2c2"/><path d="M3.5 3.5H13.5M3.5 6.5H13.5" stroke="#bdbdbd"/></svg>
<svg class="abs" style="left:1360px;top:73px" width="5" height="3" viewBox="0 0 5 3"><path d="M0 0H5L2.5 3Z" fill="#000"/></svg>
<div id="xs-addr" class="abs">
<svg class="abs" style="left:9px;top:5px" width="12" height="12" viewBox="0 0 12 12"><path d="M3 5V3.6A3 3 0 0 1 9 3.6V5" fill="none" stroke="#e3c9a2" stroke-width="1.6"/><rect x="0.8" y="4.6" width="10.4" height="7" rx="1" fill="#e6c596"/></svg>
<span class="abs" style="left:28px;top:2px;font:12.75px/22px 'Liberation Sans',sans-serif;color:#b2b2b2;white-space:pre">ssh://root:******@192.168.240.3:22</span>
<svg class="abs" style="left:1335px;top:10px" width="7" height="4" viewBox="0 0 7 4"><path d="M0 0H7L3.5 4Z" fill="#000"/></svg>
</div>
<svg class="abs" style="left:20px;top:120px" width="14" height="13" viewBox="0 0 14 13"><path d="M0.2 0.4H7.4V5.4L3.8 7.6L0.2 11.4Z" fill="#e0303e"/><path d="M5 7.6L9 3.4L13.2 7.6L9 11.8Z" fill="#4a8fd8"/><path d="M3.4 9.6L6.6 8.2L5.8 12Z" fill="#4a8fd8"/></svg>
<span class="abs" style="left:37px;top:117px;font:12px/20px 'Liberation Sans','Noto Sans CJK SC',sans-serif;color:#b6b6b6;white-space:pre">要添加当前会话，点击左侧的箭头按钮。</span>
<div class="abs" style="left:0;top:141px;width:200px;height:25px;background:#d9d9d9"></div>
<span class="abs" style="left:4px;top:143px;font:12px/20px 'Liberation Sans','Noto Sans CJK SC',sans-serif;color:#000;white-space:pre">会话管理器</span>
<svg class="abs" style="left:167px;top:148px" width="8" height="9" viewBox="0 0 8 9"><rect x="1.6" y="0.6" width="4.6" height="4.6" fill="none" stroke="#000" stroke-width="1.1"/><rect x="4.6" y="0.6" width="1.6" height="4.6" fill="#000"/><rect x="0" y="5" width="8" height="1.2" fill="#000"/><rect x="3.4" y="6" width="1.2" height="2.8" fill="#000"/></svg>
<svg class="abs" style="left:186px;top:149px" width="8" height="7" viewBox="0 0 8 7"><path d="M0.8 0.5L7.2 6.5M7.2 0.5L0.8 6.5" stroke="#000" stroke-width="1.6"/></svg>
<div id="xs-sess" class="abs">
<div class="abs" style="left:0;top:0;width:200px;height:2px;background:linear-gradient(#d9d9d9 0,#d9d9d9 1px,#e6e6e6 1px,#e6e6e6 2px)"></div>
<svg class="abs" style="left:186px;top:6px" width="13" height="13" viewBox="0 0 13 13"><path d="M8 8L12 12" stroke="#d9b48a" stroke-width="2" stroke-linecap="round"/><circle cx="5.2" cy="5.2" r="4.2" fill="#f6f7f8" stroke="#b9bcc0" stroke-width="1.3"/></svg>
<div class="abs" style="left:0;top:22px;width:199px;height:1px;background:#e3e3e3"></div>
<div class="abs" style="left:7px;top:30px;width:7px;height:7px;border:1px solid #919191;background:#fff;box-sizing:content-box"></div>
<div class="abs" style="left:9px;top:34px;width:5px;height:1px;background:#444"></div>
<div class="abs" style="left:17px;top:34px;width:6px;height:1px;background:repeating-linear-gradient(90deg,#9a9a9a 0 1px,transparent 1px 2px)"></div>
<div class="abs" style="left:30px;top:42px;width:1px;height:13px;background:repeating-linear-gradient(#9a9a9a 0 1px,transparent 1px 2px)"></div>
<div class="abs" style="left:30px;top:54px;width:11px;height:1px;background:repeating-linear-gradient(90deg,#9a9a9a 0 1px,transparent 1px 2px)"></div>
<svg class="abs" style="left:24px;top:25px" width="15" height="17" viewBox="0 0 15 17"><rect x="0.5" y="0.5" width="11" height="14" fill="#f7e08c" stroke="#e8cf72"/><g fill="#7cb342"><circle cx="10" cy="12" r="3.4"/><rect x="9.2" y="7.4" width="1.6" height="9.2"/><rect x="9.2" y="7.4" width="1.6" height="9.2" transform="rotate(60 10 12)"/><rect x="9.2" y="7.4" width="1.6" height="9.2" transform="rotate(120 10 12)"/></g><circle cx="10" cy="12" r="1.3" fill="#fff"/></svg>
<span class="abs" style="left:43px;top:24px;font:12px/20px 'Liberation Sans','Noto Sans CJK SC',sans-serif;color:#000;white-space:pre">所有会话</span>
<svg class="abs" style="left:41px;top:46px" width="16" height="15" viewBox="0 0 16 15"><path d="M8.2 0.3C12.4 0.3 15.7 3.3 15.7 7.2C15.7 11.4 12.2 14.6 7.6 14.6C3.6 14.6 0.8 12.4 0.2 8.4C1.6 9.6 3.2 10 4.6 9.6C3.6 8.4 3.4 6.6 4.2 5C5 2.2 6.4 0.3 8.2 0.3Z" fill="#e8303a"/><path d="M9 3.2C11.2 3.2 12.8 4.8 12.8 6.9C12.8 9.2 11 10.8 8.8 10.8C7 10.8 5.8 9.7 5.8 8.1C5.8 6.8 6.8 5.8 8.1 5.8C9.2 5.8 10 6.6 10 7.5C10 8.3 9.4 8.8 8.7 8.8" fill="none" stroke="#fff" stroke-width="1.2" stroke-linecap="round"/></svg>
<span class="abs" style="left:63px;top:44px;font:12px/20px 'Liberation Sans',sans-serif;color:#000;white-space:pre">192.168.240.3</span>
</div>
<div class="abs" style="left:200px;top:141px;width:4px;height:290px;background:#f0f0f0"></div>
<div class="abs" style="left:204px;top:140px;width:142px;height:25px;background:#0c7dd8"></div>
<div class="abs" style="left:211px;top:148px;width:9px;height:9px;border-radius:5px;background:#00c400"></div>
<span class="abs" style="left:227px;top:143px;font:bold 12.2px/20px 'Liberation Sans',sans-serif;color:#fff;white-space:pre"><u>1</u> 192.168.240.3</span>
<svg class="abs" style="left:330px;top:149px" width="6" height="6" viewBox="0 0 6 6"><path d="M0.4 0.4L5.6 5.6M5.6 0.4L0.4 5.6" stroke="#b4d8f6" stroke-width="1"/></svg>
<div class="abs" style="left:347px;top:141px;width:16px;height:22px;background:#fff;border:1px solid #c8c8c8;border-bottom:none;box-sizing:content-box"></div>
<svg class="abs" style="left:352px;top:148px" width="8" height="8" viewBox="0 0 8 8"><path d="M4 0V8M0 4H8" stroke="#333" stroke-width="1.8"/></svg>
<div class="abs" style="left:204px;top:163px;width:1166px;height:2px;background:#0c7dd8"></div>
<svg class="abs" style="left:1321px;top:147px" width="5" height="9" viewBox="0 0 5 9"><path d="M5 0V9L0 4.5Z" fill="#c8c8c8"/></svg>
<svg class="abs" style="left:1335px;top:147px" width="5" height="9" viewBox="0 0 5 9"><path d="M0 0V9L5 4.5Z" fill="#c8c8c8"/></svg>
<svg class="abs" style="left:1357px;top:150px" width="6" height="4" viewBox="0 0 6 4"><path d="M0 0H6L3 4Z" fill="#000"/></svg>
<div class="abs" style="left:1353px;top:165px;width:17px;height:270px;background:#f0f0f0"></div>
<svg class="abs" style="left:1357px;top:171px" width="8" height="6" viewBox="0 0 8 6"><path d="M0.6 5L4 1.4L7.4 5" fill="none" stroke="#505050" stroke-width="1.4"/></svg>
 <div id="xs-term" class="abs"><pre>[root@localhost system]# docker images;
REPOSITORY   TAG       IMAGE ID       CREATED       SIZE
java         8         d23bdf5b1b1b   4 years ago   643MB
[root@localhost system]# docker ps
CONTAINER ID   IMAGE          COMMAND                  CREATED              STATUS              PORTS                                         NAM
ES
a7eaddec9676   4e4ccbd2f877   "java -Djava.securit…"   About a minute ago   Up About a minute   0.0.0.0:49157-&gt;8080/tcp, :::49157-&gt;8080/tcp   spr
ing-demo
[root@localhost system]# docker images;
REPOSITORY    TAG       IMAGE ID       CREATED         SIZE
spring-demo   v1        4e4ccbd2f877   4 minutes ago   662MB
java          8         d23bdf5b1b1b   4 years ago     643MB
[root@localhost system]# docker ps
CONTAINER ID   IMAGE          COMMAND                  CREATED         STATUS         PORTS                                       NAMES
8d9598dbcfeb   4e4ccbd2f877   "java -Djava.securit…"   4 minutes ago   Up 4 minutes   0.0.0.0:8080-&gt;8080/tcp, :::8080-&gt;8080/tcp   spring-demo
[root@localhost system]# <span class="cur"> </span></pre></div>
</div>
<span class="abs" style="left:1440px;top:906px;font:16px/22px 'Liberation Sans',sans-serif;color:rgba(255,255,255,0.78);text-shadow:0 0 1px rgba(0,0,0,0.3);white-space:pre">https://blog.csdn.net/qq_44916038</span>
</body>
</html>
